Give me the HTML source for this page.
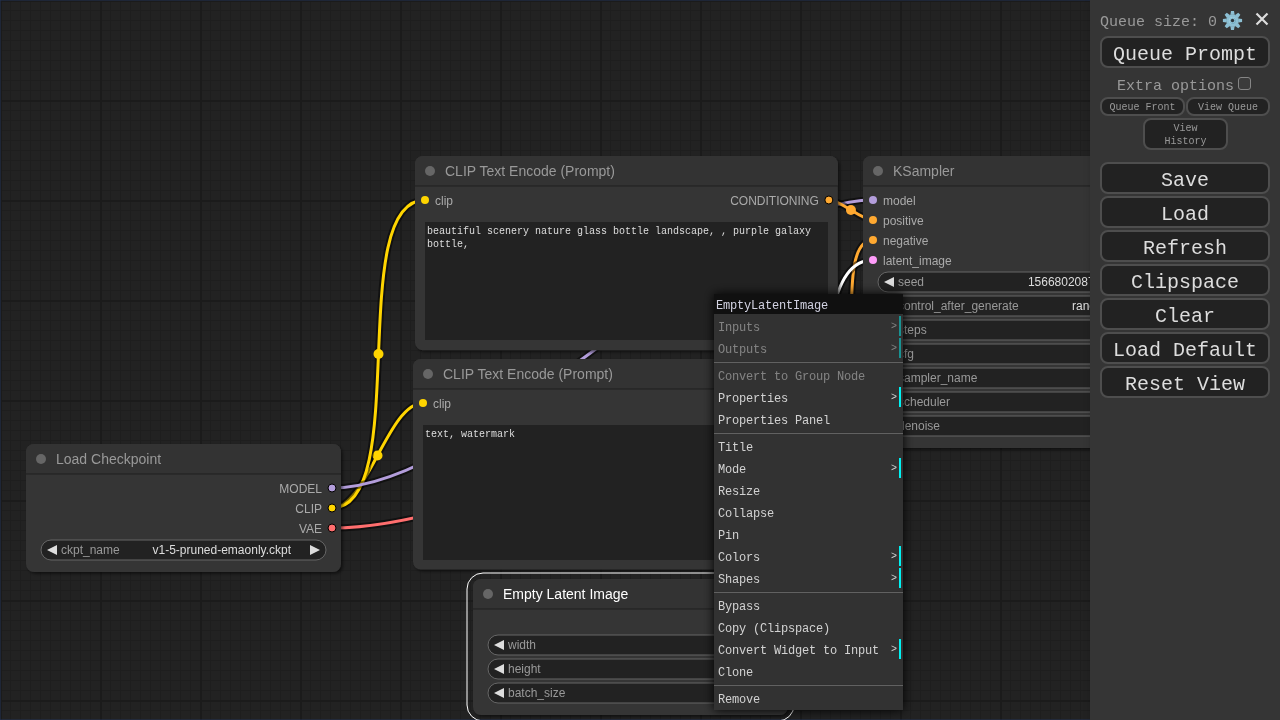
<!DOCTYPE html>
<html><head><meta charset="utf-8"><title>ComfyUI</title>
<style>
html,body{margin:0;padding:0;width:1280px;height:720px;overflow:hidden;background:#222;font-family:'Liberation Mono',monospace}
#root{position:absolute;left:0;top:0;width:1280px;height:720px;overflow:hidden;will-change:transform}
#cv{position:absolute;left:0;top:0;width:1280px;height:720px;display:block}
#cv text{font-family:'Liberation Sans', sans-serif}
.ta{position:absolute;box-sizing:border-box;background:#222;color:#ddd;font:10px/13px 'Liberation Mono',monospace;padding:3px 2px 2px 2px;overflow:hidden;white-space:pre-wrap;word-wrap:break-word}
#menu{position:absolute;left:714px;top:294px;width:189px;background:#353535;box-shadow:0 0 10px #000;filter:brightness(95%);font:12px/20px 'Liberation Mono',monospace;letter-spacing:-0.2px}
.mt{color:#dde;background:#111;margin:0;padding:2px;height:16px;white-space:nowrap}
.me{color:#ddd;margin:2px;padding:2px;height:16px;white-space:nowrap}
.me.sub{border-right:2px solid cyan}
.me.dis{opacity:.5}
.me .more{float:right;padding-right:0;font-size:10px;letter-spacing:0;position:relative;top:-1px}
.me.sep{display:block;border-top:1px solid #333;border-bottom:1px solid #666;height:0;margin:3px 0 2px 0;padding:0}
#side{position:absolute;left:1090px;top:0;width:190px;height:720px;background:#353535;font-family:'Liberation Mono',monospace;box-shadow:3px 3px 8px rgba(0,0,0,.4)}
.st{position:absolute;white-space:pre;display:block}
.b{position:absolute;box-sizing:border-box;background:#222;border:2px solid #4e4e4e;border-radius:8px}
</style></head>
<body>
<div id="root">
<svg id="cv" width="1280" height="720" viewBox="0 0 1280 720">
<defs>
<pattern id="grid" width="100" height="100" patternUnits="userSpaceOnUse">
<rect width="100" height="100" fill="#222"/>
<path d="M10.5 0V100M20.5 0V100M30.5 0V100M40.5 0V100M50.5 0V100M60.5 0V100M70.5 0V100M80.5 0V100M90.5 0V100M0 10.5H100M0 20.5H100M0 30.5H100M0 40.5H100M0 50.5H100M0 60.5H100M0 70.5H100M0 80.5H100M0 90.5H100" stroke="#1e1e1e" stroke-width="1" fill="none"/>
<path d="M1 0V100M0 1H100" stroke="#1b1b1b" stroke-width="2" fill="none"/>
</pattern>
<filter id="sh" x="-10%" y="-10%" width="120%" height="120%"><feDropShadow dx="2" dy="2" stdDeviation="1.5" flood-color="#000" flood-opacity=".5"/></filter>
</defs>
<rect width="1280" height="720" fill="url(#grid)"/>
<rect x="0" y="0" width="1280" height="720" fill="none" stroke="#223355" stroke-width="1"/>
<path d="M332 508C366.737 508 388.263 403 423 403" fill="none" stroke="#000" stroke-opacity=".5" stroke-width="7" stroke-linejoin="round"/>
<path d="M332 508C366.737 508 388.263 403 423 403" fill="none" stroke="#FFD500" stroke-width="3" stroke-linejoin="round"/>
<circle cx="377.5" cy="455.5" r="5" fill="#FFD500"/>
<path d="M332 508C412.434 508 344.566 200 425 200" fill="none" stroke="#000" stroke-opacity=".5" stroke-width="7" stroke-linejoin="round"/>
<path d="M332 508C412.434 508 344.566 200 425 200" fill="none" stroke="#FFD500" stroke-width="3" stroke-linejoin="round"/>
<circle cx="378.5" cy="354" r="5" fill="#FFD500"/>
<path d="M332 488C485.221 488 719.779 200 873 200" fill="none" stroke="#000" stroke-opacity=".5" stroke-width="7" stroke-linejoin="round"/>
<path d="M332 488C485.221 488 719.779 200 873 200" fill="none" stroke="#B39DDB" stroke-width="3" stroke-linejoin="round"/>
<circle cx="602.5" cy="344" r="5" fill="#B39DDB"/>
<path d="M828.845 200C840.963 200 860.882 220 873 220" fill="none" stroke="#000" stroke-opacity=".5" stroke-width="7" stroke-linejoin="round"/>
<path d="M828.845 200C840.963 200 860.882 220 873 220" fill="none" stroke="#FFA931" stroke-width="3" stroke-linejoin="round"/>
<circle cx="850.923" cy="210" r="5" fill="#FFA931"/>
<path d="M829.278 403C871.469 403 830.809 240 873 240" fill="none" stroke="#000" stroke-opacity=".5" stroke-width="7" stroke-linejoin="round"/>
<path d="M829.278 403C871.469 403 830.809 240 873 240" fill="none" stroke="#FFA931" stroke-width="3" stroke-linejoin="round"/>
<circle cx="851.139" cy="321.5" r="5" fill="#FFA931"/>
<path d="M779 623C872.743 623 779.257 260 873 260" fill="none" stroke="#000" stroke-opacity=".5" stroke-width="7" stroke-linejoin="round"/>
<path d="M779 623C872.743 623 779.257 260 873 260" fill="none" stroke="#FFFFFF" stroke-width="3" stroke-linejoin="round"/>
<circle cx="826" cy="441.5" r="5" fill="#FFFFFF"/>
<path d="M1169 200C1181.51 200 1206.49 202 1219 202" fill="none" stroke="#000" stroke-opacity=".5" stroke-width="7" stroke-linejoin="round"/>
<path d="M1169 200C1181.51 200 1206.49 202 1219 202" fill="none" stroke="#FF9CF9" stroke-width="3" stroke-linejoin="round"/>
<circle cx="1194" cy="201" r="5" fill="#FF9CF9"/>
<path d="M332 528C566.575 528 984.425 222 1219 222" fill="none" stroke="#000" stroke-opacity=".5" stroke-width="7" stroke-linejoin="round"/>
<path d="M332 528C566.575 528 984.425 222 1219 222" fill="none" stroke="#FF6E6E" stroke-width="3" stroke-linejoin="round"/>
<circle cx="775.5" cy="375" r="5" fill="#FF6E6E"/>
<g transform="translate(413 389)"><path d="M8 -30H417.278A8 8 0 0 1 425.278 -22V172.606A8 8 0 0 1 417.278 180.606H8A8 8 0 0 1 0 172.606V-22A8 8 0 0 1 8 -30Z" fill="#353535" filter="url(#sh)"/><path d="M8 -30H417.278A8 8 0 0 1 425.278 -22V0H0V-22A8 8 0 0 1 8 -30Z" fill="#333"/><rect x="0" y="-1" width="425.278" height="2" fill="#000" fill-opacity=".2"/><circle cx="15" cy="-15" r="5" fill="#666"/><text x="30" y="-10" font-size="14" fill="#999">CLIP Text Encode (Prompt)</text><circle cx="10" cy="14" r="4" fill="#FFD500"/><text x="20" y="19" font-size="12" fill="#AAA">clip</text><circle cx="416.278" cy="14" r="4" fill="#FFA931" stroke="#000" stroke-width="1"/><text x="406.278" y="19" font-size="12" fill="#AAA" text-anchor="end">CONDITIONING</text></g>
<g transform="translate(415 186)"><path d="M8 -30H414.845A8 8 0 0 1 422.845 -22V156.313A8 8 0 0 1 414.845 164.313H8A8 8 0 0 1 0 156.313V-22A8 8 0 0 1 8 -30Z" fill="#353535" filter="url(#sh)"/><path d="M8 -30H414.845A8 8 0 0 1 422.845 -22V0H0V-22A8 8 0 0 1 8 -30Z" fill="#333"/><rect x="0" y="-1" width="422.845" height="2" fill="#000" fill-opacity=".2"/><circle cx="15" cy="-15" r="5" fill="#666"/><text x="30" y="-10" font-size="14" fill="#999">CLIP Text Encode (Prompt)</text><circle cx="10" cy="14" r="4" fill="#FFD500"/><text x="20" y="19" font-size="12" fill="#AAA">clip</text><circle cx="413.845" cy="14" r="4" fill="#FFA931" stroke="#000" stroke-width="1"/><text x="403.845" y="19" font-size="12" fill="#AAA" text-anchor="end">CONDITIONING</text></g>
<g transform="translate(863 186)"><path d="M8 -30H307A8 8 0 0 1 315 -22V254A8 8 0 0 1 307 262H8A8 8 0 0 1 0 254V-22A8 8 0 0 1 8 -30Z" fill="#353535" filter="url(#sh)"/><path d="M8 -30H307A8 8 0 0 1 315 -22V0H0V-22A8 8 0 0 1 8 -30Z" fill="#333"/><rect x="0" y="-1" width="315" height="2" fill="#000" fill-opacity=".2"/><circle cx="15" cy="-15" r="5" fill="#666"/><text x="30" y="-10" font-size="14" fill="#999">KSampler</text><circle cx="10" cy="14" r="4" fill="#B39DDB"/><text x="20" y="19" font-size="12" fill="#AAA">model</text><circle cx="10" cy="34" r="4" fill="#FFA931"/><text x="20" y="39" font-size="12" fill="#AAA">positive</text><circle cx="10" cy="54" r="4" fill="#FFA931"/><text x="20" y="59" font-size="12" fill="#AAA">negative</text><circle cx="10" cy="74" r="4" fill="#FF9CF9"/><text x="20" y="79" font-size="12" fill="#AAA">latent_image</text><circle cx="306" cy="14" r="4" fill="#FF9CF9" stroke="#000" stroke-width="1"/><text x="296" y="19" font-size="12" fill="#AAA" text-anchor="end">LATENT</text><rect x="15" y="86" width="285" height="20" rx="10" ry="10" fill="#222" stroke="#666" stroke-width="1"/><path d="M31 91L21 96L31 101Z" fill="#DDD"/><path d="M284 91L294 96L284 101Z" fill="#DDD"/><text x="35" y="100" font-size="12" fill="#999">seed</text><text x="265" y="100" font-size="12" fill="#DDD" text-anchor="end">156680208700286</text><rect x="15" y="110" width="285" height="20" rx="10" ry="10" fill="#222" stroke="#666" stroke-width="1"/><path d="M31 115L21 120L31 125Z" fill="#DDD"/><path d="M284 115L294 120L284 125Z" fill="#DDD"/><text x="35" y="124" font-size="12" fill="#999">control_after_generate</text><text x="265" y="124" font-size="12" fill="#DDD" text-anchor="end">randomize</text><rect x="15" y="134" width="285" height="20" rx="10" ry="10" fill="#222" stroke="#666" stroke-width="1"/><path d="M31 139L21 144L31 149Z" fill="#DDD"/><path d="M284 139L294 144L284 149Z" fill="#DDD"/><text x="35" y="148" font-size="12" fill="#999">steps</text><text x="265" y="148" font-size="12" fill="#DDD" text-anchor="end">20</text><rect x="15" y="158" width="285" height="20" rx="10" ry="10" fill="#222" stroke="#666" stroke-width="1"/><path d="M31 163L21 168L31 173Z" fill="#DDD"/><path d="M284 163L294 168L284 173Z" fill="#DDD"/><text x="35" y="172" font-size="12" fill="#999">cfg</text><text x="265" y="172" font-size="12" fill="#DDD" text-anchor="end">8.0</text><rect x="15" y="182" width="285" height="20" rx="10" ry="10" fill="#222" stroke="#666" stroke-width="1"/><path d="M31 187L21 192L31 197Z" fill="#DDD"/><path d="M284 187L294 192L284 197Z" fill="#DDD"/><text x="35" y="196" font-size="12" fill="#999">sampler_name</text><text x="265" y="196" font-size="12" fill="#DDD" text-anchor="end">euler</text><rect x="15" y="206" width="285" height="20" rx="10" ry="10" fill="#222" stroke="#666" stroke-width="1"/><path d="M31 211L21 216L31 221Z" fill="#DDD"/><path d="M284 211L294 216L284 221Z" fill="#DDD"/><text x="35" y="220" font-size="12" fill="#999">scheduler</text><text x="265" y="220" font-size="12" fill="#DDD" text-anchor="end">normal</text><rect x="15" y="230" width="285" height="20" rx="10" ry="10" fill="#222" stroke="#666" stroke-width="1"/><path d="M31 235L21 240L31 245Z" fill="#DDD"/><path d="M284 235L294 240L284 245Z" fill="#DDD"/><text x="35" y="244" font-size="12" fill="#999">denoise</text><text x="265" y="244" font-size="12" fill="#DDD" text-anchor="end">1.00</text></g>
<g transform="translate(1209 188)"><path d="M8 -30H202A8 8 0 0 1 210 -22V38A8 8 0 0 1 202 46H8A8 8 0 0 1 0 38V-22A8 8 0 0 1 8 -30Z" fill="#353535" filter="url(#sh)"/><path d="M8 -30H202A8 8 0 0 1 210 -22V0H0V-22A8 8 0 0 1 8 -30Z" fill="#333"/><rect x="0" y="-1" width="210" height="2" fill="#000" fill-opacity=".2"/><circle cx="15" cy="-15" r="5" fill="#666"/><text x="30" y="-10" font-size="14" fill="#999">VAE Decode</text><circle cx="10" cy="14" r="4" fill="#FF9CF9"/><text x="20" y="19" font-size="12" fill="#AAA">samples</text><circle cx="10" cy="34" r="4" fill="#FF6E6E"/><text x="20" y="39" font-size="12" fill="#AAA">vae</text><circle cx="201" cy="14" r="4" fill="#64B5F6" stroke="#000" stroke-width="1"/><text x="191" y="19" font-size="12" fill="#AAA" text-anchor="end">IMAGE</text></g>
<g transform="translate(26 474)"><path d="M8 -30H307A8 8 0 0 1 315 -22V90A8 8 0 0 1 307 98H8A8 8 0 0 1 0 90V-22A8 8 0 0 1 8 -30Z" fill="#353535" filter="url(#sh)"/><path d="M8 -30H307A8 8 0 0 1 315 -22V0H0V-22A8 8 0 0 1 8 -30Z" fill="#333"/><rect x="0" y="-1" width="315" height="2" fill="#000" fill-opacity=".2"/><circle cx="15" cy="-15" r="5" fill="#666"/><text x="30" y="-10" font-size="14" fill="#999">Load Checkpoint</text><circle cx="306" cy="14" r="4" fill="#B39DDB" stroke="#000" stroke-width="1"/><text x="296" y="19" font-size="12" fill="#AAA" text-anchor="end">MODEL</text><circle cx="306" cy="34" r="4" fill="#FFD500" stroke="#000" stroke-width="1"/><text x="296" y="39" font-size="12" fill="#AAA" text-anchor="end">CLIP</text><circle cx="306" cy="54" r="4" fill="#FF6E6E" stroke="#000" stroke-width="1"/><text x="296" y="59" font-size="12" fill="#AAA" text-anchor="end">VAE</text><rect x="15" y="66" width="285" height="20" rx="10" ry="10" fill="#222" stroke="#666" stroke-width="1"/><path d="M31 71L21 76L31 81Z" fill="#DDD"/><path d="M284 71L294 76L284 81Z" fill="#DDD"/><text x="35" y="80" font-size="12" fill="#999">ckpt_name</text><text x="265" y="80" font-size="12" fill="#DDD" text-anchor="end">v1-5-pruned-emaonly.ckpt</text></g>
<g transform="translate(473 609)"><path d="M8 -30H307A8 8 0 0 1 315 -22V98A8 8 0 0 1 307 106H8A8 8 0 0 1 0 98V-22A8 8 0 0 1 8 -30Z" fill="#353535" filter="url(#sh)"/><path d="M8 -30H307A8 8 0 0 1 315 -22V0H0V-22A8 8 0 0 1 8 -30Z" fill="#333"/><rect x="0" y="-1" width="315" height="2" fill="#000" fill-opacity=".2"/><circle cx="15" cy="-15" r="5" fill="#666"/><text x="30" y="-10" font-size="14" fill="#FFF">Empty Latent Image</text><rect x="-6" y="-36" width="327" height="148" rx="16" ry="16" fill="none" stroke="#FFF" stroke-width="1"/><circle cx="306" cy="14" r="4" fill="#FF9CF9" stroke="#000" stroke-width="1"/><text x="296" y="19" font-size="12" fill="#AAA" text-anchor="end">LATENT</text><rect x="15" y="26" width="285" height="20" rx="10" ry="10" fill="#222" stroke="#666" stroke-width="1"/><path d="M31 31L21 36L31 41Z" fill="#DDD"/><path d="M284 31L294 36L284 41Z" fill="#DDD"/><text x="35" y="40" font-size="12" fill="#999">width</text><text x="265" y="40" font-size="12" fill="#DDD" text-anchor="end">512</text><rect x="15" y="50" width="285" height="20" rx="10" ry="10" fill="#222" stroke="#666" stroke-width="1"/><path d="M31 55L21 60L31 65Z" fill="#DDD"/><path d="M284 55L294 60L284 65Z" fill="#DDD"/><text x="35" y="64" font-size="12" fill="#999">height</text><text x="265" y="64" font-size="12" fill="#DDD" text-anchor="end">512</text><rect x="15" y="74" width="285" height="20" rx="10" ry="10" fill="#222" stroke="#666" stroke-width="1"/><path d="M31 79L21 84L31 89Z" fill="#DDD"/><path d="M284 79L294 84L284 89Z" fill="#DDD"/><text x="35" y="88" font-size="12" fill="#999">batch_size</text><text x="265" y="88" font-size="12" fill="#DDD" text-anchor="end">1</text></g>
</svg>
<div class="ta" style="left:425px;top:222px;width:402.845px;height:118.313px">beautiful scenery nature glass bottle landscape, , purple galaxy bottle,</div>
<div class="ta" style="left:423px;top:425px;width:405.278px;height:134.606px">text, watermark</div>
<div id="menu">
<div class="mt">EmptyLatentImage</div>
<div class="me dis sub">Inputs<span class="more">&gt;</span></div>
<div class="me dis sub">Outputs<span class="more">&gt;</span></div>
<div class="me sep"></div>
<div class="me dis">Convert to Group Node</div>
<div class="me sub">Properties<span class="more">&gt;</span></div>
<div class="me ">Properties Panel</div>
<div class="me sep"></div>
<div class="me ">Title</div>
<div class="me sub">Mode<span class="more">&gt;</span></div>
<div class="me ">Resize</div>
<div class="me ">Collapse</div>
<div class="me ">Pin</div>
<div class="me sub">Colors<span class="more">&gt;</span></div>
<div class="me sub">Shapes<span class="more">&gt;</span></div>
<div class="me sep"></div>
<div class="me ">Bypass</div>
<div class="me ">Copy (Clipspace)</div>
<div class="me sub">Convert Widget to Input<span class="more">&gt;</span></div>
<div class="me ">Clone</div>
<div class="me sep"></div>
<div class="me ">Remove</div>
</div>
<div id="side">
<span class="st" style="left:10px;top:13px;font-size:15px;line-height:20px;height:20px;color:#999;">Queue size: 0</span>
<svg style="position:absolute;left:132px;top:9.7px" width="21" height="21" viewBox="-10.5 -10.5 21 21"><g fill="#8cbfd3"><circle r="6.3"/><path d="M-1.5 -9.6H1.5L2.1 -5.8H-2.1Z" transform="rotate(0)"/><path d="M-1.5 -9.6H1.5L2.1 -5.8H-2.1Z" transform="rotate(45)"/><path d="M-1.5 -9.6H1.5L2.1 -5.8H-2.1Z" transform="rotate(90)"/><path d="M-1.5 -9.6H1.5L2.1 -5.8H-2.1Z" transform="rotate(135)"/><path d="M-1.5 -9.6H1.5L2.1 -5.8H-2.1Z" transform="rotate(180)"/><path d="M-1.5 -9.6H1.5L2.1 -5.8H-2.1Z" transform="rotate(225)"/><path d="M-1.5 -9.6H1.5L2.1 -5.8H-2.1Z" transform="rotate(270)"/><path d="M-1.5 -9.6H1.5L2.1 -5.8H-2.1Z" transform="rotate(315)"/></g><circle r="3.6" fill="#a6d3e2"/><circle cx="0.35" cy="0.35" r="3.1" fill="#6fa9bf"/><circle cx="0" cy="0" r="2.7" fill="#8cbfd3"/><circle r="1.7" fill="#2b353b"/></svg>
<svg style="position:absolute;left:164px;top:11px" width="16" height="16" viewBox="0 0 16 16"><path d="M2.5 2.5L13.5 13.5M13.5 2.5L2.5 13.5" stroke="#ddd" stroke-width="2.2" fill="none"/></svg>
<div class="b" style="left:10px;top:36px;width:170px;height:32px"></div>
<span class="st" style="left:10px;top:42px;width:170px;text-align:center;font-size:20px;line-height:26px;height:26px;color:#ddd;">Queue Prompt</span>
<span class="st" style="left:27px;top:77px;font-size:15px;line-height:20px;height:20px;color:#999;">Extra options</span>
<span style="position:absolute;left:148px;top:77px;width:11px;height:11px;border:1px solid #858585;border-radius:3px;background:#3b3b3b"></span>
<div class="b" style="left:10px;top:97px;width:84.5px;height:18.5px"></div>
<span class="st" style="left:10px;top:101px;width:85px;text-align:center;font-size:10px;line-height:13px;height:13px;color:#999;">Queue Front</span>
<div class="b" style="left:95.5px;top:97px;width:84.5px;height:18.5px"></div>
<span class="st" style="left:95.5px;top:101px;width:85px;text-align:center;font-size:10px;line-height:13px;height:13px;color:#999;">View Queue</span>
<div class="b" style="left:53.2px;top:118.2px;width:84.5px;height:31.4px"></div>
<span class="st" style="left:53px;top:122px;width:85px;text-align:center;font-size:10px;line-height:13px;height:13px;color:#999;">View</span>
<span class="st" style="left:53px;top:135px;width:85px;text-align:center;font-size:10px;line-height:13px;height:13px;color:#999;">History</span>
<div class="b" style="left:10px;top:162px;width:170px;height:32px"></div>
<span class="st" style="left:10px;top:168px;width:170px;text-align:center;font-size:20px;line-height:26px;height:26px;color:#ddd;">Save</span>
<div class="b" style="left:10px;top:196px;width:170px;height:32px"></div>
<span class="st" style="left:10px;top:202px;width:170px;text-align:center;font-size:20px;line-height:26px;height:26px;color:#ddd;">Load</span>
<div class="b" style="left:10px;top:230px;width:170px;height:32px"></div>
<span class="st" style="left:10px;top:236px;width:170px;text-align:center;font-size:20px;line-height:26px;height:26px;color:#ddd;">Refresh</span>
<div class="b" style="left:10px;top:264px;width:170px;height:32px"></div>
<span class="st" style="left:10px;top:270px;width:170px;text-align:center;font-size:20px;line-height:26px;height:26px;color:#ddd;">Clipspace</span>
<div class="b" style="left:10px;top:298px;width:170px;height:32px"></div>
<span class="st" style="left:10px;top:304px;width:170px;text-align:center;font-size:20px;line-height:26px;height:26px;color:#ddd;">Clear</span>
<div class="b" style="left:10px;top:332px;width:170px;height:32px"></div>
<span class="st" style="left:10px;top:338px;width:170px;text-align:center;font-size:20px;line-height:26px;height:26px;color:#ddd;">Load Default</span>
<div class="b" style="left:10px;top:366px;width:170px;height:32px"></div>
<span class="st" style="left:10px;top:372px;width:170px;text-align:center;font-size:20px;line-height:26px;height:26px;color:#ddd;">Reset View</span>
</div>
</div>
</body></html>
